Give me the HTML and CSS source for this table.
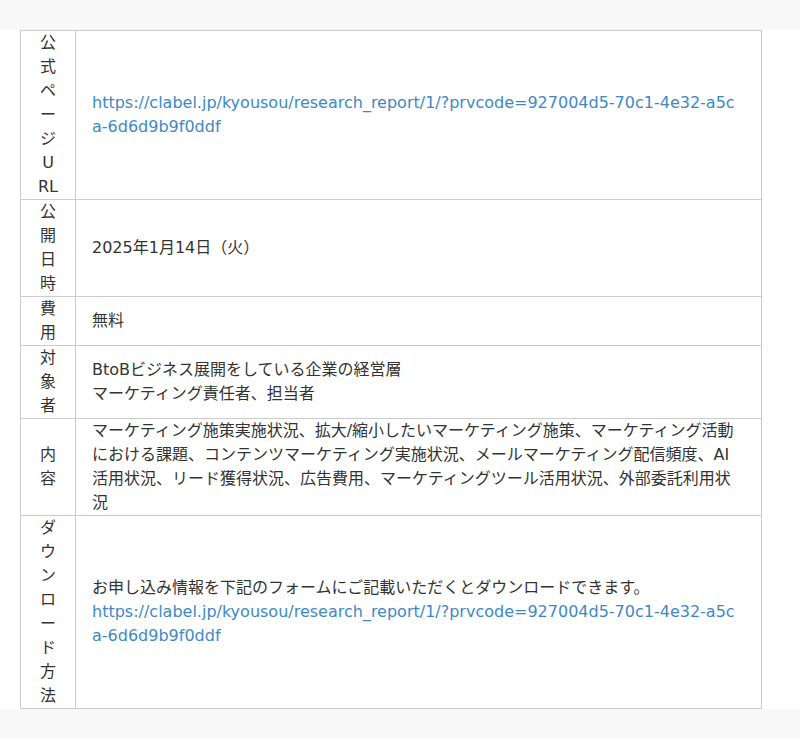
FILE: index.html
```html
<!DOCTYPE html>
<html lang="ja">
<head>
    <meta charset="UTF-8">
    <meta name="viewport" content="width=device-width, initial-scale=1.0">
    <title>調査レポート</title>
    <link rel="stylesheet" href="styles.css">
</head>
<body>
    <div class="content">
        <table class="info-table">
            <tr>
                <th>公式ページURL</th>
                <td><a href="#">https://clabel.jp/kyousou/research_report/1/?prvcode=927004d5-70c1-4e32-a5ca-6d6d9b9f0ddf</a></td>
            </tr>
            <tr>
                <th>公開日時</th>
                <td>2025年1月14日（火）</td>
            </tr>
            <tr>
                <th>費用</th>
                <td>無料</td>
            </tr>
            <tr>
                <th>対象者</th>
                <td>BtoBビジネス展開をしている企業の経営層<br>マーケティング責任者、担当者</td>
            </tr>
            <tr>
                <th>内容</th>
                <td>マーケティング施策実施状況、拡大/縮小したいマーケティング施策、マーケティング活動における課題、コンテンツマーケティング実施状況、メールマーケティング配信頻度、AI活用状況、リード獲得状況、広告費用、マーケティングツール活用状況、外部委託利用状況</td>
            </tr>
            <tr>
                <th>ダウンロード方法</th>
                <td>お申し込み情報を下記のフォームにご記載いただくとダウンロードできます。<br>
                    <a href="#">https://clabel.jp/kyousou/research_report/1/?prvcode=927004d5-70c1-4e32-a5ca-6d6d9b9f0ddf</a></td>
            </tr>
        </table>
    </div>
</body>
</html>
```

FILE: styles.css
```css
body {
    margin: 0;
    padding: 30px 0;
    background-color: #f8f8f8;
    font-family: "DejaVu Sans", "Noto Sans CJK JP", sans-serif;
    font-size: 16px;
    line-height: 24px;
    color: #333;
}

.content {
    background-color: #fff;
    padding: 0 20px;
}

.info-table {
    width: 742px;
    border-collapse: collapse;
}

.info-table th,
.info-table td {
    border: 1px solid #ccc;
    vertical-align: middle;
}

.info-table th {
    width: 22px;
    padding: 0 16px;
    font-weight: normal;
    text-align: center;
    word-break: break-all;
}

.info-table td {
    padding: 0 22px 0 16px;
    text-align: left;
}

.info-table a {
    color: #3d89c8;
    text-decoration: none;
    word-break: break-all;
}
```
